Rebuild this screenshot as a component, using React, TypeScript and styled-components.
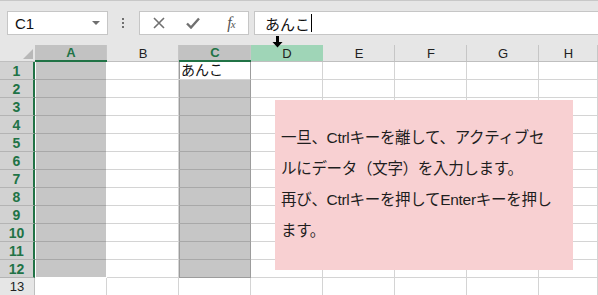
import React from "react";
import styled, { createGlobalStyle, css } from "styled-components";

const GREEN = "#217346";
const COLS = ["A", "B", "C", "D", "E", "F", "G", "H"];
const TRACKS = "35px repeat(7, 72px) 59px";
const JP = `"Liberation Sans", "Noto Sans CJK JP", sans-serif`;

const Global = createGlobalStyle`
  body {
    margin: 0;
    overflow: hidden;
    background: #fff;
    font-family: "Liberation Sans", Arial, sans-serif;
  }
`;

const Sheet = styled.div`
  position: relative;
  width: 598px;
  height: 295px;
  overflow: hidden;
`;

const Toolbar = styled.div`
  box-sizing: border-box;
  height: 45px;
  background: #e6e6e6;
  border-top: 1px solid #c8c8c8;
  display: flex;
  align-items: flex-start;
  padding: 10px 0 0 7px;
`;

const NameBox = styled.div`
  box-sizing: border-box;
  width: 101px;
  height: 24px;
  background: #fff;
  border: 1px solid #c6c6c6;
  display: flex;
  align-items: center;
  justify-content: space-between;
  padding: 0 7px 0 7px;
  font-size: 15px;
  color: #111;
`;

const Caret = styled.span`
  width: 0;
  height: 0;
  border-left: 4px solid transparent;
  border-right: 4px solid transparent;
  border-top: 4px solid #6f6f6f;
`;

const Dots = styled.div`
  margin: 7px 0 0 13px;
  width: 4px;
  display: flex;
  flex-direction: column;
  align-items: center;
  gap: 2px;

  span {
    width: 2px;
    height: 2px;
    background: #6f6f6f;
  }
`;

const FxButtons = styled.div`
  box-sizing: border-box;
  margin-left: 14px;
  width: 110px;
  height: 24px;
  background: #fff;
  border: 1px solid #c6c6c6;
  display: flex;
  align-items: center;
  padding-left: 12px;
`;

const IconSlot = styled.span<{ $gap?: number }>`
  display: flex;
  align-items: center;
  justify-content: center;
  width: 14px;
  margin-left: ${(p) => p.$gap ?? 0}px;
`;

const FxLabel = styled.span`
  font-family: "Liberation Serif", "Times New Roman", serif;
  font-style: italic;
  color: #555;
  font-size: 16px;
  letter-spacing: -1px;

  small {
    font-size: 11px;
  }
`;

const FormulaInput = styled.div`
  box-sizing: border-box;
  margin-left: 5px;
  flex: 1;
  height: 24px;
  background: #fff;
  border: 1px solid #c6c6c6;
  border-right: none;
  display: flex;
  align-items: center;
  padding-left: 10px;
  font-family: ${JP};
  font-size: 15px;
  color: #111;
`;

const TextCursor = styled.span`
  display: inline-block;
  width: 1px;
  height: 18px;
  background: #000;
  margin-left: 1px;
`;

const Grid = styled.div`
  display: grid;
  grid-template-columns: ${TRACKS};
`;

const Corner = styled.div`
  position: relative;
  box-sizing: border-box;
  height: 17px;
  background: #e6e6e6;
  border-bottom: 1px solid #bfbfbf;

  &::after {
    content: "";
    position: absolute;
    right: 2px;
    bottom: 2px;
    border-left: 10px solid transparent;
    border-bottom: 10px solid #b8b8b8;
  }
`;

const ColHead = styled.div<{ $state?: "sel" | "hot" }>`
  box-sizing: border-box;
  height: 17px;
  display: flex;
  align-items: center;
  justify-content: center;
  font-size: 13px;
  color: #222;
  background: #e6e6e6;
  border-bottom: 1px solid #bfbfbf;
  box-shadow: inset -1px 0 #c6c6c6;

  ${(p) =>
    p.$state === "sel" &&
    css`
      background: #c2c2c2;
      color: ${GREEN};
      font-weight: bold;
      border-bottom: 2px solid ${GREEN};
    `}
  ${(p) =>
    p.$state === "hot" &&
    css`
      background: #9fd5b7;
      box-shadow: none;
    `}
`;

const RowHead = styled.div<{ $sel?: boolean }>`
  box-sizing: border-box;
  height: 18px;
  display: flex;
  align-items: center;
  justify-content: center;
  font-size: 13px;
  color: #222;
  background: #e6e6e6;
  border-bottom: 1px solid #c6c6c6;
  border-right: 1px solid #bfbfbf;

  ${(p) =>
    p.$sel &&
    css`
      background: #d2d2d2;
      color: ${GREEN};
      font-weight: bold;
      font-size: 14px;
      border-bottom-color: #b4b4b4;
      border-right: 2px solid ${GREEN};
    `}
`;

type Fill = "a" | "c" | "active";

const Cell = styled.div<{ $fill?: Fill; $last?: boolean }>`
  box-sizing: border-box;
  height: 18px;
  background: #fff;
  border-right: 1px solid #d4d4d4;
  border-bottom: 1px solid #d4d4d4;
  padding-left: 2px;
  font-family: ${JP};
  font-size: 14px;
  line-height: 17px;
  color: #111;
  white-space: nowrap;

  ${(p) =>
    (p.$fill === "a" || p.$fill === "c") &&
    css`
      background: #c6c6c6;
      border-bottom-color: #a8a8a8;
    `}
  ${(p) =>
    p.$fill === "a" &&
    css`
      border-right-color: #fff;
      box-shadow: inset 1px 0 #fff;
    `}
  ${(p) =>
    (p.$fill === "c" || p.$fill === "active") &&
    css`
      border-right-color: #9c9c9c;
      box-shadow: inset 1px 0 #9c9c9c;
    `}
  ${(p) =>
    p.$last &&
    p.$fill === "a" &&
    css`
      border-bottom-color: #fff;
    `}
  ${(p) =>
    p.$last &&
    p.$fill === "c" &&
    css`
      border-bottom-color: #9c9c9c;
    `}
`;

const Note = styled.div`
  position: absolute;
  left: 275px;
  top: 100px;
  box-sizing: border-box;
  width: 298px;
  height: 170px;
  background: #f8d0d2;
  padding: 22px 0 0 6px;
  font-family: ${JP};
  font-size: 15.5px;
  line-height: 31px;
  color: #1e1e1e;
  letter-spacing: -0.3px;
`;

const NoteLine = styled.div`
  white-space: nowrap;
`;

const PointerArrow = styled.svg`
  position: absolute;
  left: 272px;
  top: 36px;
`;

function fillFor(col: string, row: number): Fill | undefined {
  if (row > 12) return undefined;
  if (col === "A") return "a";
  if (col === "C") return row === 1 ? "active" : "c";
  return undefined;
}

const ROWS = Array.from({ length: 13 }, (_, i) => i + 1);

export default function App() {
  return (
    <Sheet>
      <Global />
      <Toolbar>
        <NameBox>
          C1
          <Caret />
        </NameBox>
        <Dots>
          <span />
          <span />
          <span />
        </Dots>
        <FxButtons>
          <IconSlot>
            <svg width="12" height="12" viewBox="0 0 12 12">
              <path d="M1 1L11 11M11 1L1 11" stroke="#707070" strokeWidth="1.6" />
            </svg>
          </IconSlot>
          <IconSlot $gap={20}>
            <svg width="14" height="12" viewBox="0 0 14 12">
              <path d="M1 6.5L5 10.5L13 1.5" stroke="#707070" strokeWidth="2.4" fill="none" />
            </svg>
          </IconSlot>
          <IconSlot $gap={24}>
            <FxLabel>
              f<small>x</small>
            </FxLabel>
          </IconSlot>
        </FxButtons>
        <FormulaInput>
          あんこ
          <TextCursor />
        </FormulaInput>
      </Toolbar>

      <Grid>
        <Corner />
        {COLS.map((c) => (
          <ColHead key={c} $state={c === "A" || c === "C" ? "sel" : c === "D" ? "hot" : undefined}>
            {c}
          </ColHead>
        ))}
        {ROWS.map((r) => (
          <React.Fragment key={r}>
            <RowHead $sel={r <= 12}>{r}</RowHead>
            {COLS.map((c) => (
              <Cell key={c} $fill={fillFor(c, r)} $last={r === 12}>
                {c === "C" && r === 1 ? "あんこ" : null}
              </Cell>
            ))}
          </React.Fragment>
        ))}
      </Grid>

      <PointerArrow width="11" height="12" viewBox="0 0 11 12">
        <path d="M4 0H7V6H10.5L5.5 11.5L0.5 6H4Z" fill="#000" />
      </PointerArrow>

      <Note>
        <NoteLine>一旦、Ctrlキーを離して、アクティブセ</NoteLine>
        <NoteLine>ルにデータ（文字）を入力します。</NoteLine>
        <NoteLine>再び、Ctrlキーを押してEnterキーを押し</NoteLine>
        <NoteLine>ます。</NoteLine>
      </Note>
    </Sheet>
  );
}
